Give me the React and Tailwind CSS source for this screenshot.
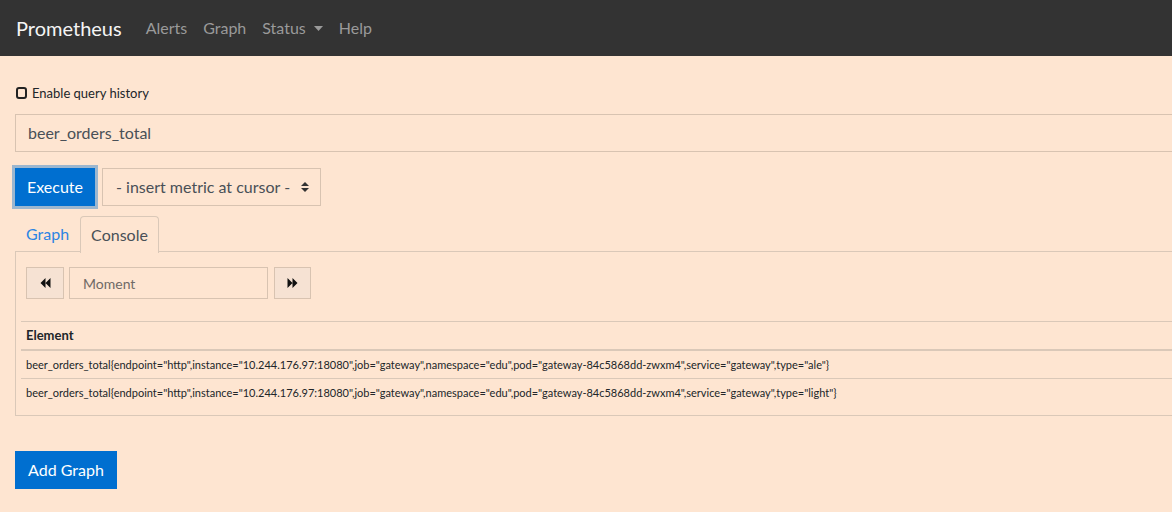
import React from "react";

const rows = [
  'beer_orders_total{endpoint="http",instance="10.244.176.97:18080",job="gateway",namespace="edu",pod="gateway-84c5868dd-zwxm4",service="gateway",type="ale"}',
  'beer_orders_total{endpoint="http",instance="10.244.176.97:18080",job="gateway",namespace="edu",pod="gateway-84c5868dd-zwxm4",service="gateway",type="light"}',
];

function Backward() {
  return (
    <svg width="11" height="10" viewBox="0 0 11 10">
      <path d="M5.5 0 L0.5 5 L5.5 10 Z M10.5 0 L5.5 5 L10.5 10 Z" fill="#111" />
    </svg>
  );
}
function Forward() {
  return (
    <svg width="11" height="10" viewBox="0 0 11 10">
      <path d="M0.5 0 L5.5 5 L0.5 10 Z M5.5 0 L10.5 5 L5.5 10 Z" fill="#111" />
    </svg>
  );
}

export default function App() {
  return (
    <div
      className="w-screen min-h-[512px] overflow-hidden bg-[#fee5d1] text-[#212529]"
      style={{ fontFamily: "Lato, sans-serif" }}
    >
      {/* navbar */}
      <nav className="flex h-[56px] items-center bg-[#333333] pl-[16px]">
        <span className="mr-[16px] text-[20px] leading-[30px] text-[#f5f5f5]">Prometheus</span>
        <a className="px-[8px] text-[16px] text-[#9a9a9a]">Alerts</a>
        <a className="px-[8px] text-[16px] text-[#9a9a9a]">Graph</a>
        <a className="flex items-center px-[8px] text-[16px] text-[#9a9a9a]">
          Status
          <svg className="ml-[8px]" width="9" height="5" viewBox="0 0 9 5">
            <path d="M0 0 L9 0 L4.5 5 Z" fill="#9a9a9a" />
          </svg>
        </a>
        <a className="px-[8px] text-[16px] text-[#9a9a9a]">Help</a>
      </nav>

      <div className="w-[1320px] pl-[15px] pt-[28px]">
        {/* checkbox */}
        <div className="flex h-[18px] items-center">
          <span className="ml-[1px] inline-block h-[12px] w-[11px] rounded-[3px] border-[2px] border-[#222]" />
          <span className="ml-[5px] text-[13px] leading-[18px] text-[#212529]">Enable query history</span>
        </div>

        {/* query input */}
        <div className="mt-[12px] flex h-[38px] items-center border border-[#d8c3b1] pl-[12px] text-[16px] text-[#495057]">
          beer_orders_total
        </div>

        {/* execute row */}
        <div className="mt-[16px] flex items-center">
          <button className="h-[38px] w-[80px] bg-[#006fd0] text-[16px] text-white shadow-[0_0_0_3px_#9bb6cf]">
            Execute
          </button>
          <div className="ml-[7px] flex h-[38px] w-[219px] items-center border border-[#d8c3b1] pl-[13px] text-[16px] text-[#495057]">
            <span>- insert metric at cursor -</span>
            <svg className="ml-[11px]" width="8" height="12" viewBox="0 0 8 12">
              <path d="M0 5 L4 1 L8 5 Z M0 7 L8 7 L4 11 Z" fill="#333" />
            </svg>
          </div>
        </div>

        {/* tabs */}
        <div className="mt-[10px] flex h-[36px] border-b border-[#dac8b8]">
          <div className="flex h-[36px] items-center px-[11px] text-[16px] text-[#2c84e3]">Graph</div>
          <div className="mb-[-1px] flex h-[37px] items-center rounded-t-[4px] border border-b-0 border-[#dac8b8] bg-[#fee5d1] px-[10px] text-[16px] text-[#495057]">
            Console
          </div>
        </div>

        {/* panel */}
        <div className="border-x border-b border-[#dac8b8] px-[5px] pb-[9px] pt-[15px]">
          <div className="ml-[5px] flex h-[32px] items-stretch">
            <div className="flex w-[38px] items-center justify-center border border-[#d8c3b1] bg-[#f6e2d3]">
              <Backward />
            </div>
            <div className="ml-[5px] flex w-[199px] items-center border border-[#d8c3b1] pl-[13px] text-[14px] text-[#6f6a66]">
              Moment
            </div>
            <div className="ml-[6px] flex w-[37px] items-center justify-center border border-[#d8c3b1] bg-[#f6e2d3]">
              <Forward />
            </div>
          </div>

          <div className="mt-[22px] text-[11px]">
            <div className="border-t border-b-[2px] border-[#dac8b8] px-[5px] py-[5px] leading-[17px] font-bold text-[13px] text-[#212529]">
              Element
            </div>
            <div className="px-[5px] py-[5px] leading-[17px] whitespace-nowrap text-[#212529]">{rows[0]}</div>
            <div className="border-t border-[#dac8b8] px-[5px] py-[5px] leading-[17px] whitespace-nowrap text-[#212529]">
              {rows[1]}
            </div>
          </div>
        </div>

        <button className="mt-[35px] h-[38px] w-[102px] bg-[#006fd0] text-[16px] text-white">Add Graph</button>
      </div>
    </div>
  );
}
